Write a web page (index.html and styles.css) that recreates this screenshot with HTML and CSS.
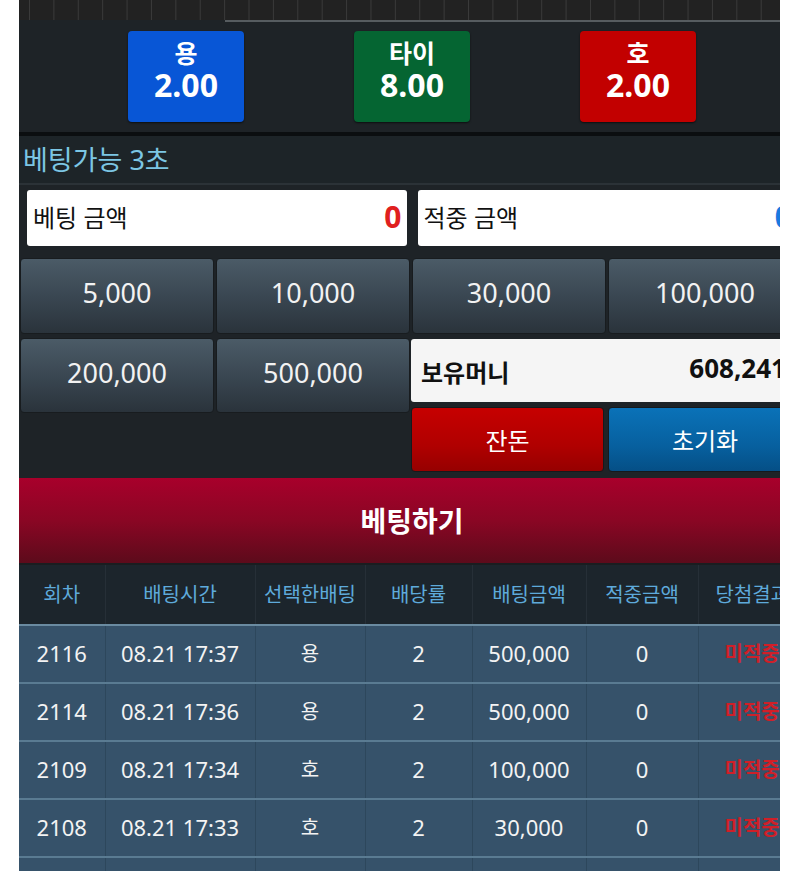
FILE: index.html
```html
<!DOCTYPE html>
<html lang="ko">
<head>
<meta charset="utf-8">
<title>베팅</title>
<link rel="stylesheet" href="styles.css">
</head>
<body>
<div class="frame">
  <div class="page">
    <div class="strip"></div>
    <div class="strip-line"></div>
    <div class="odds">
      <div class="odd odd-blue"><span class="odd-name">용</span><span class="odd-val">2.00</span></div>
      <div class="odd odd-green"><span class="odd-name">타이</span><span class="odd-val">8.00</span></div>
      <div class="odd odd-red"><span class="odd-name">호</span><span class="odd-val">2.00</span></div>
    </div>
    <div class="status">베팅가능 3초</div>
    <div class="panel">
      <div class="inputs">
        <div class="field"><span class="field-label">베팅 금액</span><span class="field-val red">0</span></div>
        <div class="field"><span class="field-label">적중 금액</span><span class="field-val blue">0</span></div>
      </div>
      <div class="chips">
        <div class="chip">5,000</div>
        <div class="chip">10,000</div>
        <div class="chip">30,000</div>
        <div class="chip">100,000</div>
        <div class="chip chip-short">200,000</div>
        <div class="chip chip-short">500,000</div>
        <div class="side">
          <div class="money"><span class="money-label">보유머니</span><span class="money-val">608,241</span></div>
          <div class="actions">
            <div class="act act-red">잔돈</div>
            <div class="act act-blue">초기화</div>
          </div>
        </div>
      </div>
    </div>
    <div class="bet-btn">베팅하기</div>
    <table class="history">
      <colgroup>
        <col class="c1"><col class="c2"><col class="c3"><col class="c4"><col class="c5"><col class="c6"><col class="c7">
      </colgroup>
      <thead>
        <tr><th>회차</th><th>배팅시간</th><th>선택한배팅</th><th>배당률</th><th>배팅금액</th><th>적중금액</th><th class="th-last">당첨결과</th></tr>
      </thead>
      <tbody>
        <tr><td>2116</td><td>08.21 17:37</td><td class="pick">용</td><td>2</td><td>500,000</td><td>0</td><td class="lose">미적중</td></tr>
        <tr><td>2114</td><td>08.21 17:36</td><td class="pick">용</td><td>2</td><td>500,000</td><td>0</td><td class="lose">미적중</td></tr>
        <tr><td>2109</td><td>08.21 17:34</td><td class="pick">호</td><td>2</td><td>100,000</td><td>0</td><td class="lose">미적중</td></tr>
        <tr><td>2108</td><td>08.21 17:33</td><td class="pick">호</td><td>2</td><td>30,000</td><td>0</td><td class="lose">미적중</td></tr>
        <tr><td>2107</td><td>08.21 17:32</td><td class="pick">용</td><td>2</td><td>30,000</td><td>0</td><td class="lose">미적중</td></tr>
      </tbody>
    </table>
  </div>
</div>
</body>
</html>
```
FILE: styles.css
```css
html, body {
  margin: 0;
  padding: 0;
  background: #ffffff;
}
body {
  font-family: "Noto Sans", "Noto Sans CJK KR", sans-serif;
}
.frame {
  margin-left: 19px;
  width: 761px;
  height: 871px;
  overflow: hidden;
  background: #1e2327;
}
.page {
  width: 786px;
}
.strip {
  height: 20px;
  background-color: #222222;
  background-image: linear-gradient(90deg, #3a3a3a 0, #3a3a3a 1px, transparent 1px);
  background-size: 24.4px 100%;
  background-position: 10px 0;
}
.strip-line {
  height: 2px;
  background: linear-gradient(90deg, #1e2327 206px, #565c60 206px);
}
.odds {
  display: grid;
  grid-template-columns: repeat(3, 226px);
  justify-content: center;
  padding: 9px 0 10px;
  border-bottom: 4px solid #0b0e10;
}
.odd {
  justify-self: center;
  width: 116px;
  height: 91px;
  box-sizing: border-box;
  padding-top: 8px;
  border-radius: 4px;
  display: flex;
  flex-direction: column;
  align-items: center;
  justify-content: flex-start;
  color: #ffffff;
  font-weight: bold;
  box-shadow: 0 1px 2px rgba(0,0,0,0.6);
}
.odd-blue { background: #0856d6; }
.odd-green { background: #056532; }
.odd-red { background: #c20000; }
.odd-name {
  font-size: 25px;
  line-height: 28px;
}
.odd-val {
  font-size: 32px;
  line-height: 36px;
}
.status {
  height: 47px;
  line-height: 47px;
  padding-left: 4px;
  font-size: 27px;
  color: #7cc6e4;
  background: #1d2428;
  border-bottom: 2px solid #2b3237;
}
.panel {
  padding-top: 5px;
  background: #1e2327;
}
.inputs {
  display: flex;
  gap: 11px;
  padding: 0 8px;
}
.field {
  width: 380px;
  height: 56px;
  background: #ffffff;
  border-radius: 3px;
  display: flex;
  align-items: center;
  justify-content: space-between;
  padding: 0 5px 3px 6px;
  box-sizing: border-box;
}
.field-label {
  font-size: 24px;
  color: #111111;
}
.field-val {
  font-size: 30px;
  font-weight: bold;
}
.red { color: #e0201e; }
.blue { color: #1a7ae0; }
.chips {
  margin-top: 12px;
  padding-left: 1px;
  display: grid;
  grid-template-columns: repeat(4, 194px);
  column-gap: 2px;
  row-gap: 4px;
}
.chip {
  height: 76px;
  box-sizing: border-box;
  padding-bottom: 7px;
  border: 1px solid #181c1f;
  border-radius: 4px;
  background: linear-gradient(180deg, #4b5b67 0%, #3a4752 50%, #2a333b 100%);
  color: #f2f2f2;
  font-size: 27px;
  display: flex;
  align-items: center;
  justify-content: center;
}
.chip-short {
  height: 75px;
  align-self: start;
}
.side {
  grid-column: 3 / 5;
  display: flex;
  flex-direction: column;
  gap: 5px;
  padding-top: 1px;
  margin-left: -1px;
}
.money {
  height: 63px;
  background: #f5f5f5;
  border-radius: 3px;
  display: flex;
  align-items: center;
  justify-content: space-between;
  padding: 0 16px 0 10px;
  color: #111111;
  font-weight: bold;
}
.money-label {
  font-size: 24px;
  margin-top: 1px;
}
.money-val {
  font-size: 26px;
  margin-bottom: 6px;
}
.actions {
  display: flex;
  gap: 4px;
}
.act {
  flex-shrink: 0;
  width: 193px;
  height: 65px;
  box-sizing: border-box;
  border: 1px solid #15191c;
  border-radius: 4px;
  color: #ffffff;
  font-size: 24px;
  display: flex;
  align-items: center;
  justify-content: center;
}
.act-red {
  background: linear-gradient(180deg, #c60000 0%, #b00000 60%, #960000 100%);
}
.act-blue {
  background: linear-gradient(180deg, #0a72b8 0%, #07609f 60%, #054f86 100%);
  width: 194px;
}
.bet-btn {
  margin-top: 6px;
  height: 87px;
  padding-bottom: 2px;
  box-sizing: border-box;
  background: linear-gradient(180deg, #a8002b 0%, #8a0624 50%, #5c0b1b 100%);
  border-bottom: 2px solid #1a1d20;
  color: #ffffff;
  font-size: 28px;
  font-weight: bold;
  display: flex;
  align-items: center;
  justify-content: center;
}
.history {
  width: 795px;
  table-layout: fixed;
  border-collapse: collapse;
}
.c1 { width: 86px; }
.c2 { width: 150px; }
.c3 { width: 110px; }
.c4 { width: 107px; }
.c5 { width: 114px; }
.c6 { width: 112px; }
.c7 { width: 116px; }
.history th {
  height: 57px;
  padding: 0 0 2px;
  background: #1c252c;
  color: #5eaadb;
  font-size: 20px;
  font-weight: normal;
  border-left: 1px solid #262f37;
  border-bottom: 2px solid #6a8ba1;
  white-space: nowrap;
  overflow: hidden;
}
.history th.th-last {
  text-align: left;
  padding-left: 17px;
}
.history td {
  height: 53px;
  padding: 0 0 3px;
  background: #36526a;
  color: #f3f3f3;
  font-size: 22px;
  text-align: center;
  border-left: 1px solid #2d475c;
  border-bottom: 2px solid #5a7b92;
  white-space: nowrap;
  overflow: hidden;
}
.history th:first-child,
.history td:first-child {
  border-left: none;
}
.history td.pick {
  font-size: 20px;
}
.history td.lose {
  color: #d01f28;
  font-weight: bold;
  font-size: 20px;
  text-align: left;
  padding-left: 26px;
}
```
